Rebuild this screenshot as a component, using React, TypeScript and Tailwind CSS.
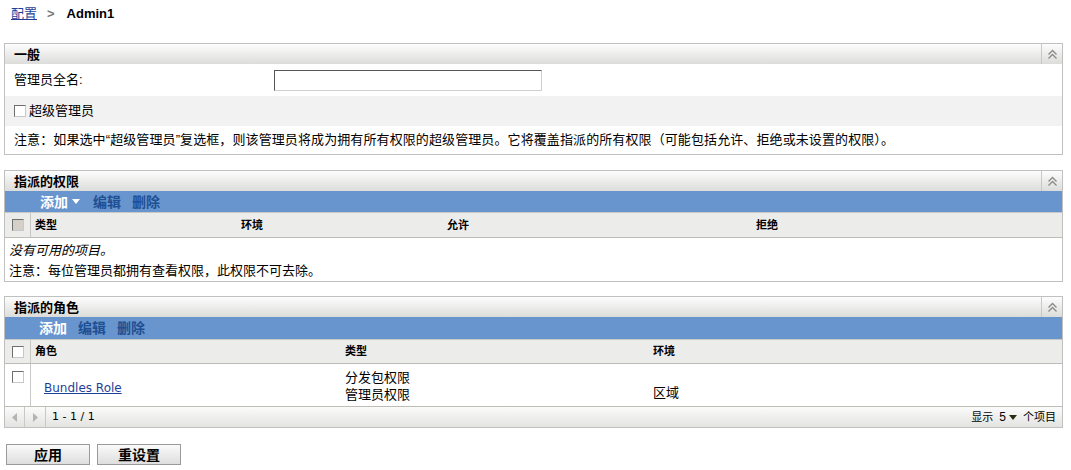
import React from "react";

const font = { fontFamily: '"Liberation Sans", "Noto Sans CJK SC", sans-serif' };
const dv = { fontFamily: '"DejaVu Sans", "Noto Sans CJK SC", sans-serif' };

function Collapse() {
  return (
    <div className="w-[21px] self-stretch border-l border-[#c8c8c8] flex items-center justify-center">
      <svg width="11" height="11" viewBox="0 0 11 11">
        <path d="M1.5 5.5 L5.5 1.5 L9.5 5.5" fill="none" stroke="#8a8a8a" strokeWidth="1.3" />
        <path d="M1.5 9.5 L5.5 5.5 L9.5 9.5" fill="none" stroke="#8a8a8a" strokeWidth="1.3" />
      </svg>
    </div>
  );
}

function PanelHeader({ title }: { title: string }) {
  return (
    <div className="h-[20px] flex items-center bg-linear-to-b from-[#fdfdfd] to-[#dcdcda]">
      <div className="flex-1 pl-[9px] text-[13px] font-bold text-black leading-none">{title}</div>
      <Collapse />
    </div>
  );
}

function Checkbox({ gray = false }: { gray?: boolean }) {
  return (
    <div
      className={`w-[12px] h-[12px] border border-t-[#6f6f6f] border-l-[#6f6f6f] border-r-[#c8c8c8] border-b-[#c8c8c8] ${
        gray ? "bg-[#d4d0c8]" : "bg-white"
      }`}
    />
  );
}

function Toolbar({ dropdown = false, h }: { dropdown?: boolean; h: string }) {
  return (
    <div className={`${h} bg-[#6895ce] flex items-center text-[14px] font-bold leading-none`}>
      <span className={`text-white ${dropdown ? "ml-[35px]" : "ml-[34px]"}`}>添加</span>
      {dropdown && (
        <svg width="8" height="5" viewBox="0 0 8 5" className="ml-[4px]">
          <path d="M0 0 L8 0 L4 5 Z" fill="#ffffff" />
        </svg>
      )}
      <span className={`text-[#1f4f93] ${dropdown ? "ml-[13px]" : "ml-[11px]"}`}>编辑</span>
      <span className="text-[#1f4f93] ml-[11px]">删除</span>
    </div>
  );
}

export default function App() {
  return (
    <div className="w-[1071px] h-[470px] bg-white text-black" style={font}>
      <div className="h-[43px] pl-[11px] pt-[6px] flex items-start text-[13px]">
        <span className="text-[#1f3f99] underline leading-[16px]">配置</span>
        <span className="ml-[10px] text-[#777] font-bold leading-[16px]">&gt;</span>
        <span className="ml-[12px] font-bold leading-[16px]">Admin1</span>
      </div>

      <div className="ml-[4px] w-[1059px]">
        {/* Panel 1 */}
        <div className="border border-[#c0c0c0]">
          <PanelHeader title="一般" />
          <div className="h-[32px] flex items-center text-[13px]">
            <div className="w-[269px] pl-[9px]">管理员全名:</div>
            <div className="w-[268px] h-[21px] border border-t-[#555] border-l-[#555] border-r-[#d0d0d0] border-b-[#d0d0d0] bg-white" />
          </div>
          <div className="h-[30px] flex items-center bg-[#f2f2f2] text-[13px] pl-[9px]">
            <Checkbox />
            <span className="ml-[3px]">超级管理员</span>
          </div>
          <div className="h-[28px] flex items-center text-[13px] pl-[9px] tracking-[0.1px]">
            注意：如果选中“超级管理员”复选框，则该管理员将成为拥有所有权限的超级管理员。它将覆盖指派的所有权限（可能包括允许、拒绝或未设置的权限）。
          </div>
        </div>

        {/* Panel 2 */}
        <div className="mt-[15px] border border-[#c0c0c0]">
          <PanelHeader title="指派的权限" />
          <Toolbar dropdown h="h-[21px]" />
          <div className="h-[26px] flex items-stretch bg-[#ececea] border-t border-[#c8c8c4] border-b border-b-[#bdbdb5] text-[11px] font-bold">
            <div className="w-[26px] border-r border-[#c8c8c4] flex items-center justify-center">
              <Checkbox gray />
            </div>
            <div className="w-[206px] pl-[4px] flex items-center">类型</div>
            <div className="w-[206px] pl-[4px] flex items-center">环境</div>
            <div className="w-[309px] pl-[4px] flex items-center">允许</div>
            <div className="flex-1 pl-[4px] flex items-center">拒绝</div>
          </div>
          <div className="h-[23px] flex items-center pl-[4px] text-[13px] italic pt-[2px]">没有可用的项目。</div>
          <div className="h-[20px] flex items-center pl-[4px] text-[13px]">注意：每位管理员都拥有查看权限，此权限不可去除。</div>
        </div>

        {/* Panel 3 */}
        <div className="mt-[14px] border border-[#c0c0c0]">
          <PanelHeader title="指派的角色" />
          <Toolbar h="h-[22px]" />
          <div className="h-[25px] flex items-stretch bg-[#ececea] border-t border-[#c8c8c4] border-b border-b-[#bdbdb5] text-[11px] font-bold">
            <div className="w-[26px] border-r border-[#c8c8c4] flex items-center justify-center">
              <Checkbox />
            </div>
            <div className="w-[310px] pl-[4px] flex items-center">角色</div>
            <div className="w-[308px] pl-[4px] flex items-center">类型</div>
            <div className="flex-1 pl-[4px] flex items-center">环境</div>
          </div>
          <div className="h-[43px] flex items-stretch border-b border-[#bdbdb5] text-[13px]">
            <div className="w-[26px] border-r border-[#c8c8c4] flex justify-center pt-[7px]">
              <Checkbox />
            </div>
            <div className="w-[310px] pl-[13px] flex items-center pt-[5px]">
              <span className="text-[#1f3f99] underline text-[12px]" style={dv}>Bundles Role</span>
            </div>
            <div className="w-[308px] pl-[4px] flex flex-col justify-center leading-[17px] pt-[1px]">
              <span>分发包权限</span>
              <span>管理员权限</span>
            </div>
            <div className="flex-1 pl-[4px] flex items-end pb-[4px]">区域</div>
          </div>
          <div className="h-[20px] flex items-stretch bg-linear-to-b from-[#fbfbfb] to-[#e3e3e1] text-[12px]">
            <div className="w-[20px] border-r border-[#c8c8c4] flex items-center justify-center">
              <svg width="5" height="9" viewBox="0 0 5 9"><path d="M5 0 L0 4.5 L5 9 Z" fill="#b4b4b4" /></svg>
            </div>
            <div className="w-[21px] border-r border-[#c8c8c4] flex items-center justify-center">
              <svg width="5" height="9" viewBox="0 0 5 9"><path d="M0 0 L5 4.5 L0 9 Z" fill="#b4b4b4" /></svg>
            </div>
            <div className="flex-1 pl-[6px] flex items-center text-[11px]" style={dv}>1 - 1 / 1</div>
            <div className="flex items-center pr-[6px] text-[11px]">
              <span>显示</span>
              <span className="ml-[6px] text-[12px]">5</span>
              <svg width="8" height="5" viewBox="0 0 8 5" className="ml-[3px]"><path d="M0 0 L8 0 L4 5 Z" fill="#2a2a10" /></svg>
              <span className="ml-[6px]">个项目</span>
            </div>
          </div>
        </div>

        {/* Buttons */}
        <div className="mt-[16px] flex gap-[7px] ml-[2px]">
          <button className="w-[84px] h-[21px] border border-[#9a9a9a] bg-linear-to-b from-[#fafafa] to-[#dedede] text-[14px] font-bold leading-none">应用</button>
          <button className="w-[84px] h-[21px] border border-[#9a9a9a] bg-linear-to-b from-[#fafafa] to-[#dedede] text-[14px] font-bold leading-none">重设置</button>
        </div>
      </div>
    </div>
  );
}
